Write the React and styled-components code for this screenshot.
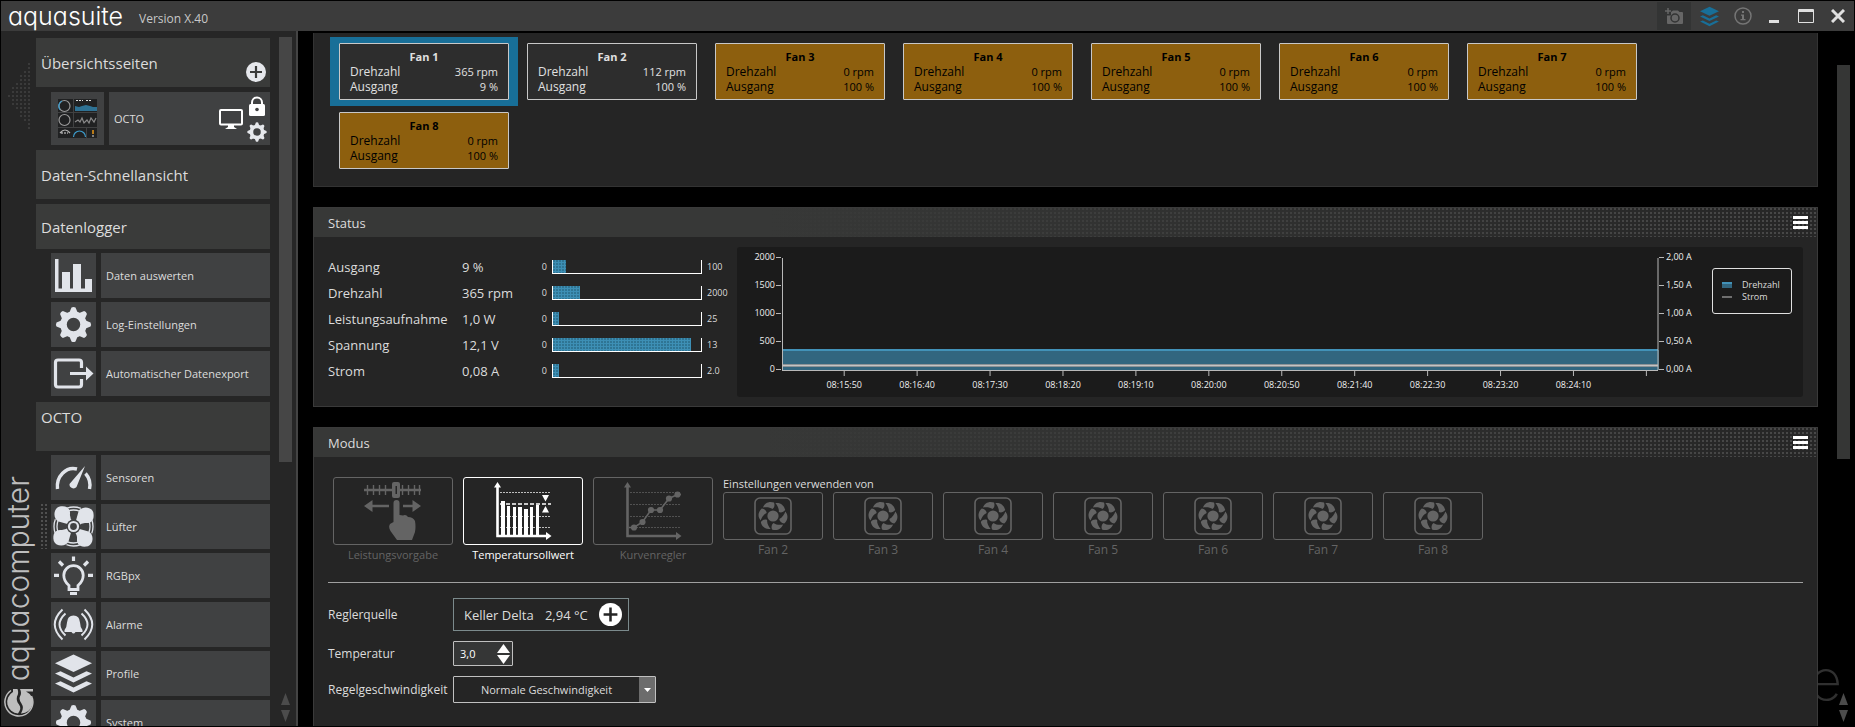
import React from "react";
import styled, { createGlobalStyle } from "styled-components";

const GlobalStyle = createGlobalStyle`
  * { box-sizing: border-box; }
  html, body, #root { height: 100%; }
  body {
    margin: 0;
    background: #000;
    color: #dcdcdc;
    font-family: "Open Sans", "Noto Sans", sans-serif;
    font-size: 12px;
    line-height: 16px;
    overflow: hidden;
  }
  button, input, select { font: inherit; color: inherit; margin: 0; }
  button { padding: 0; border: 0; background: none; cursor: pointer; }
  a { color: inherit; text-decoration: none; }
  svg { display: block; flex: none; }
  h2 { margin: 0; font-weight: 400; }
`;

/* ---------- window ---------- */

const Window = styled.div`
  display: flex;
  flex-direction: column;
  height: 100vh;
  padding: 1px;
  position: relative;
  z-index: 0;
`;

const TitleBar = styled.header`
  flex: none;
  display: flex;
  align-items: center;
  height: 30px;
  padding-left: 7px;
  background: #3c3c3c;
`;

const Wordmark = styled.span`
  font-family: "Inter", sans-serif;
  font-feature-settings: "cv11";
  font-weight: 400;
`;

const AppName = styled(Wordmark)`
  width: 131px;
  font-size: 25px;
  line-height: 26px;
  font-weight: 300;
  color: #fff;
`;

const Version = styled.span`
  flex: 1;
  padding-top: 5px;
  font-size: 12px;
  color: #c8c8c8;
`;

const WindowButton = styled.button`
  display: flex;
  align-items: center;
  justify-content: center;
  width: ${(p) => p.$width || 32}px;
  height: 28px;
  color: ${(p) => p.$color || "#e0e0e0"};
  background: ${(p) => (p.$shaded ? "#333434" : "none")};
`;

const Body = styled.div`
  flex: 1;
  min-height: 0;
  display: flex;
`;

/* ---------- sidebar ---------- */

const Sidebar = styled.aside`
  flex: none;
  display: flex;
  width: 297px;
  background: #262626;
  border-right: 2px solid #444;
  overflow: hidden;
`;

const BrandStrip = styled.div`
  flex: none;
  width: 35px;
  display: flex;
  flex-direction: column;
  align-items: center;
  justify-content: space-between;
  padding: 30px 0 9px;
`;

const Brand = styled.div`
  display: flex;
  flex-direction: column;
  align-items: center;
  gap: 6px;
`;

const BrandName = styled(Wordmark)`
  writing-mode: vertical-rl;
  transform: rotate(180deg);
  font-size: 30px;
  line-height: 35px;
  font-weight: 300;
  color: #bebebe;
`;

const Nav = styled.nav`
  flex: 1;
  padding-top: 7px;
  overflow: hidden;
`;

const SectionTitle = styled.h2`
  display: flex;
  align-items: center;
  justify-content: space-between;
  height: ${(p) => p.$height || 49}px;
  margin-bottom: ${(p) => p.$after || 5}px;
  padding: 0 4px 0 5px;
  padding-bottom: ${(p) => p.$raise || 0}px;
  background: #3a3b3a;
  font-size: 15px;
  line-height: 20px;
`;

const AddButton = styled.button`
  align-self: flex-end;
  padding-bottom: 5px;
`;

const PageRow = styled.div`
  display: flex;
  gap: 5px;
  height: 53px;
  margin: 0 0 5px 15px;
`;

const PageThumb = styled.a`
  width: 53px;
  padding: 7px;
  background: #404142;
`;

const PageItem = styled.div`
  flex: 1;
  display: flex;
  align-items: center;
  gap: 4px;
  padding: 3px 3px 3px 5px;
  background: #404142;
`;

const PageName = styled.a`
  flex: 1;
  font-size: 11px;
`;

const PageTools = styled.div`
  display: flex;
  flex-direction: column;
  gap: 6px;
`;

const NavItem = styled.a`
  display: flex;
  gap: 5px;
  height: 45px;
  margin: 0 0 4px 15px;
  position: relative;
`;

const NavIcon = styled.span`
  width: 45px;
  background: #404142;
  color: #e1e4ea;
`;

const NavLabel = styled.span`
  flex: 1;
  display: flex;
  align-items: center;
  padding-left: 5px;
  background: #404142;
  font-size: 11px;
`;

const NavGroup = styled.div`
  padding-bottom: 2px;
`;

const DragHandle = styled.span`
  position: absolute;
  left: -10px;
  top: 0;
  width: 8px;
  height: 45px;
  background-image: radial-gradient(circle at 1px 1px, #505050 1px, transparent 1px);
  background-size: 4px 4px;
`;

const ScrollRail = styled.div`
  flex: none;
  display: flex;
  flex-direction: column;
  justify-content: space-between;
  width: 13px;
  margin: ${(p) => p.$top}px ${(p) => p.$right}px 4px ${(p) => p.$left}px;
`;

const ScrollThumb = styled.div`
  height: ${(p) => p.$size}%;
  background: ${(p) => p.$color};
`;

const ScrollArrows = styled.div`
  display: flex;
  justify-content: center;
  color: #4c4c4c;
`;

/* ---------- main ---------- */

const Main = styled.main`
  flex: 1;
  min-width: 0;
  display: flex;
  flex-direction: column;
  gap: 20px;
  margin: 2px 0 0 15px;
  overflow: hidden;
`;

const Watermark = styled(Wordmark)`
  position: absolute;
  right: 13px;
  bottom: 11px;
  z-index: -1;
  font-size: 57px;
  line-height: 72px;
  font-weight: 200;
  color: #303030;
`;

const Panel = styled.section`
  flex: ${(p) => (p.$fill ? "1 0 auto" : "none")};
  border: 1px solid #3a3a3a;
  border-bottom-width: ${(p) => (p.$fill ? 0 : 1)}px;
  background: #252525;
`;

const PanelHeader = styled.header`
  display: flex;
  align-items: center;
  justify-content: space-between;
  height: 29px;
  padding: 0 9px 0 14px;
  background-color: #262626;
  background-image:
    linear-gradient(90deg, #373837 30%, transparent 100%),
    radial-gradient(circle at 1px 1px, #484848 1px, transparent 1px);
  background-size: 100% 100%, 4px 4px;
`;

const PanelTitle = styled.h2`
  font-size: 13px;
  line-height: 20px;
`;

const FanOverview = styled.section`
  flex: none;
  display: flex;
  flex-wrap: wrap;
  padding: 4px 16px 11px;
  border: 1px solid #333;
  border-top: 0;
  background: #252525;
`;

const FanSlot = styled.div`
  width: 188px;
  height: 69px;
  padding: 6px 9px;
  background: ${(p) => (p.$selected ? "#186f98" : "none")};
`;

const FanCard = styled.button`
  display: flex;
  flex-direction: column;
  width: 100%;
  height: 100%;
  padding: 5px 10px;
  border: 1px solid #c8c8c8;
  border-radius: 1px;
  line-height: 15px;
  background: ${(p) => (p.$warn ? "#8d5f0e" : "#2d2d2d")};
  color: ${(p) => (p.$warn ? "#000" : "#e0e0e0")};
`;

const FanName = styled.strong`
  align-self: center;
  font-size: 11px;
`;

const FanLine = styled.span`
  display: flex;
  justify-content: space-between;
  align-self: stretch;
`;

const FanValue = styled.span`
  font-size: 11px;
`;

/* ---------- status ---------- */

const StatusBody = styled.div`
  display: flex;
  gap: 15px;
  padding: 10px 14px 9px;
`;

const Readings = styled.div`
  flex: none;
  width: 394px;
  padding-top: 7px;
`;

const Reading = styled.div`
  display: grid;
  grid-template-columns: 134px 70px 20px 150px 1fr;
  align-items: center;
  height: 26px;
  font-size: 13px;
`;

const Limit = styled.span`
  padding: 0 5px;
  font-size: 9px;
  text-align: ${(p) => (p.$low ? "right" : "left")};
`;

const Gauge = styled.div`
  height: 14px;
  border: 1px solid #fff;
  border-top: 0;
`;

const GaugeFill = styled.div`
  height: 100%;
  background-color: #3d8fb5;
  background-image: radial-gradient(circle at 1px 1px, #2f7594 1px, transparent 1px);
  background-size: 3px 3px;
`;

const ChartBox = styled.div`
  flex: 1;
  min-width: 0;
  display: flex;
  align-items: flex-start;
  height: 150px;
  padding: 10px 11px 0 45px;
  border-radius: 3px;
  background: #1b1b1b;
`;

const Plot = styled.svg`
  flex: 1 1 0;
  min-width: 0;
  height: 136px;
  overflow: visible;
  font-size: 9px;
  fill: #f0f0f0;
`;

const Legend = styled.ul`
  flex: none;
  width: 80px;
  height: 46px;
  margin: 11px 0 0 54px;
  padding: 10px 9px;
  border: 1px solid #e0e0e0;
  border-radius: 3px;
  list-style: none;
  font-size: 9px;
  line-height: 12px;
`;

const LegendEntry = styled.li`
  display: flex;
  align-items: center;
  gap: 10px;
`;

const Swatch = styled.span`
  width: 10px;
  height: ${(p) => (p.$line ? 2 : 6)}px;
  background: ${(p) => (p.$line ? "#6f6f6f" : "#32667f")};
  border-top: ${(p) => (p.$line ? "0" : "2px solid #4292b8")};
`;

/* ---------- mode ---------- */

const ModeBody = styled.div`
  padding: 18px 14px 22px;
`;

const ModeRow = styled.div`
  display: flex;
  align-items: flex-start;
  gap: 10px;
  height: 108px;
  padding-left: 5px;
  border-bottom: 1px solid #a0a0a0;
`;

const Choice = styled.button`
  display: flex;
  flex-direction: column;
  align-items: center;
  width: ${(p) => (p.$large ? 120 : 100)}px;
  margin-top: ${(p) => (p.$large ? 2 : 0)}px;
  font-size: ${(p) => (p.$large ? 11 : 12)}px;
  line-height: 20px;
  color: ${(p) => (p.$active ? "#fff" : "#646464")};
`;

const ChoiceFrame = styled.span`
  display: flex;
  align-items: center;
  justify-content: center;
  width: 100%;
  height: ${(p) => p.$height}px;
  border: 1px solid currentColor;
  border-radius: 3px;
`;

const SourceGroup = styled.fieldset`
  margin: 0;
  padding: 0;
  border: 0;
`;

const SourceLegend = styled.legend`
  padding: 0;
  font-size: 11px;
  line-height: 17px;
`;

const SourceRow = styled.div`
  display: flex;
  gap: 10px;
`;

const Form = styled.form`
  display: grid;
  grid-template-columns: 115px max-content;
  gap: 10px;
  align-items: center;
  justify-items: start;
  padding-top: 15px;
`;

const FieldLabel = styled.label`
  font-size: 12px;
  white-space: nowrap;
`;

const SourceBox = styled.div`
  display: flex;
  align-items: center;
  justify-content: space-between;
  width: 176px;
  height: 33px;
  padding: 0 6px 0 10px;
  border: 1px solid #7b8a8c;
  font-size: 13px;
`;

const NumberBox = styled.div`
  display: flex;
  align-items: center;
  width: 60px;
  height: 25px;
  padding: 0 2px 0 6px;
  border: 1px solid #c0c0c0;
  border-radius: 1px;
  background: #353636;
`;

const NumberInput = styled.input`
  flex: 1;
  min-width: 0;
  padding: 0;
  border: 0;
  outline: 0;
  background: none;
  color: #fff;
  font-size: 11px;
`;

const Stepper = styled.span`
  display: flex;
  flex-direction: column;
  color: #fff;
`;

const SelectBox = styled.div`
  display: flex;
  width: 203px;
  height: 27px;
  border: 1px solid #c0c0c0;
  border-radius: 1px;
`;

const Select = styled.select`
  flex: 1;
  min-width: 0;
  padding: 0;
  border: 0;
  outline: 0;
  appearance: none;
  background: transparent;
  font-size: 11px;
  text-align-last: center;
`;

const SelectArrow = styled.span`
  display: flex;
  align-items: center;
  justify-content: center;
  width: 16px;
  background: #6c6c6c;
  pointer-events: none;
`;

/* ---------- icons ---------- */

const CellSvg = ({ children }) => (
  <svg width="45" height="45" viewBox="0 0 45 45" fill="currentColor" aria-hidden="true">
    {children}
  </svg>
);

const GearShape = () => (
  <g transform="translate(22.5 22.5)">
    <circle r="10" fill="none" stroke="currentColor" strokeWidth="6.5" />
    {[0, 45, 90, 135, 180, 225, 270, 315].map((a) => (
      <path key={a} d="M-2-17Q0-18 2-17L4.5-11H-4.5Z" transform={`rotate(${a})`} />
    ))}
  </g>
);

const LayersShape = () => (
  <>
    <path d="M22.5 3.5 41 12.2 22.5 21 4 12.2Z" />
    <path d="M4 22.5 9.5 20.2 22.5 26.5 35.5 20.2 41 22.5 22.5 31.5Z" />
    <path d="M4 32.5 9.5 30.2 22.5 36.5 35.5 30.2 41 32.5 22.5 41.5Z" />
  </>
);

const PlusIcon = ({ size, color, ink }) => (
  <svg width={size} height={size} viewBox="0 0 20 20" aria-hidden="true">
    <circle cx="10" cy="10" r="10" fill={color} />
    <path d="M10 4v12M4 10h12" stroke={ink} strokeWidth="2.2" />
  </svg>
);

const NAV_ICONS = {
  bars: (
    <CellSvg>
      <path d="M4 6h3.5v29.5H11V19h8v16.5h3V11h8v24.500h4V26h7v13H4Z" />
    </CellSvg>
  ),
  gear: (
    <CellSvg>
      <GearShape />
    </CellSvg>
  ),
  export: (
    <CellSvg>
      <path d="M30.5 17v-5.500q0-2.500-2.500-2.500H7q-2.500 0-2.500 2.500v22q0 2.500 2.500 2.500h21q2.500 0 2.500-2.500V28" fill="none" stroke="currentColor" strokeWidth="3.2" />
      <path d="M19 21h16v-5.500l7.500 7-7.500 7V24H19Z" />
    </CellSvg>
  ),
  gauge: (
    <CellSvg>
      <path d="M6.5 34a16 18 0 0 1 19.500-20M34.500 18.500a16 17 0 0 1 4 15.500" fill="none" stroke="currentColor" strokeWidth="3.4" />
      <path d="M34 11 25.500 32a4 4 0 0 1-7-3Z" />
    </CellSvg>
  ),
  fan: (
    <CellSvg>
      <g fill="none" stroke="currentColor" strokeWidth="1.3">
        <circle cx="22.5" cy="22.5" r="19.500" strokeDasharray="14 16.600" strokeDashoffset="7" />
        <circle cx="22.5" cy="22.5" r="16.500" strokeDasharray="12 13.900" strokeDashoffset="6" />
      </g>
      {[0, 90, 180, 270].map((a) => (
        <path key={a} d="M20 21 7.500 17.500C2 15 2 5 8 2.800C16 1 19.500 5 19 10Q18.500 14 22 18Z" transform={`rotate(${a} 22.5 22.5)`} />
      ))}
      <circle cx="22.5" cy="22.5" r="7" fill="#404142" />
      <circle cx="22.5" cy="22.5" r="4.500" fill="none" stroke="currentColor" strokeWidth="2.2" />
    </CellSvg>
  ),
  bulb: (
    <CellSvg>
      <g fill="none" stroke="currentColor" strokeWidth="2.8">
        <path d="M18 36.500V32.500C15.500 30.500 12.800 27 12.800 22.300a9.700 9.700 0 0 1 19.400 0C32.200 27 29.500 30.500 27 32.500V36.500Z" />
        <path d="M22.500 3.500v4.500M3 22.300h5M37 22.300h5M8 8.500l4 4M37 8.500l-4 4" strokeWidth="3.2" />
      </g>
      <path d="M19 39h7v3h-7Z" />
    </CellSvg>
  ),
  alarm: (
    <CellSvg>
      <path d="M22.500 13.500q6 0 6.500 7 .2 5 2.500 7.500v2H24.500q-2 3-4 0H13.500v-2q2.300-2.500 2.500-7.500.5-7 6.500-7Z" />
      <path d="M11.500 7.500Q-4 22.500 11.500 37.500M14.500 11.500Q2.500 22.500 14.500 33.500M33.500 7.500Q49 22.500 33.500 37.500M30.500 11.500Q42.500 22.500 30.500 33.500" fill="none" stroke="currentColor" strokeWidth="2" />
    </CellSvg>
  ),
  layers: (
    <CellSvg>
      <LayersShape />
    </CellSvg>
  ),
};

const MenuIcon = () => (
  <svg width="15" height="13" viewBox="0 0 15 13" fill="#fff" aria-hidden="true">
    <path d="M0 0h15v3H0ZM0 5h15v3H0ZM0 10h15v3H0Z" />
  </svg>
);

const ArrowPair = ({ width, height, gap, color = "currentColor" }) => (
  <svg width={width} height={height * 2 + gap} fill={color} aria-hidden="true">
    <path d={`M0 ${height}h${width}L${width / 2} 0Z`} />
    <path d={`M0 ${height + gap}h${width}L${width / 2} ${height * 2 + gap}Z`} />
  </svg>
);

const CollapseArrow = () => {
  const dots = [];
  for (let c = 0; c < 6; c++) {
    for (let r = -Math.round(c * 1.6); r <= Math.round(c * 1.6); r += 1) {
      dots.push(<rect key={`${c}/${r}`} x={c * 4} y={34 + r * 4} width="2" height="2" />);
    }
  }
  return (
    <svg width="22" height="70" fill="#3a3a3a" aria-hidden="true">
      {dots}
    </svg>
  );
};

const BrandLogo = () => (
  <svg width="30" height="30" viewBox="0 0 30 30" aria-hidden="true">
    <path d="M7 3.500A14 14 0 1 0 27.500 9" fill="none" stroke="#bebebe" strokeWidth="1.5" />
    <path d="M9 5A11.500 11.500 0 0 0 14 26.500Q18 21 15 17.500T13 9.500Q15 6 13.500 2H9Z" fill="#bebebe" />
    <path d="M16 2h13v2.500H22A11.500 11.500 0 0 1 17 26.500Q20.500 21 17.500 16.500T16 9.500Q18 6 16 2Z" fill="#bebebe" />
  </svg>
);

const PageThumbnail = () => (
  <svg width="39" height="39" viewBox="0 0 39 39" aria-hidden="true">
    <path fill="#202122" d="M0 0h39v39H0Z" />
    <path stroke="#404142" d="M0 13.500h39M0 28.500h39M15.500 0v28M28.500 29v10" />
    <g fill="none" strokeWidth="1.2">
      <circle cx="6.500" cy="7" r="5.500" stroke="#9a9a9a" />
      <path d="M2 10.500A5.500 5.500 0 0 1 4 2" stroke="#3d9ccc" />
      <circle cx="6.500" cy="21" r="5.500" stroke="#9a9a9a" />
      <path d="M15.500 38a6 6 0 1 1 12 0" stroke="#3d9ccc" />
      <path d="M2 34q5-6 10 0" stroke="#b0b0b0" />
      <path d="M17 23l3-2 2 2 2-4 2 5 3-3 2 3 2-5 3 4 2-4" stroke="#8a8a8a" />
      <path d="M18 1.500h7M28 1.500h6M3 34h7M34 37h3" stroke="#ddd" strokeDasharray="2 1" />
    </g>
    <path fill="#2f7294" d="M17 7l4 1 3-1 4-1 4 1 3 1h4v4H17Z" />
    <path fill="#b87a18" d="M34 31h2v4h-2Z" />
  </svg>
);

const LockIcon = () => (
  <svg width="20" height="20" viewBox="0 0 20 20" aria-hidden="true">
    <path d="M5 10V6.500a5 5 0 0 1 10 0V10" fill="none" stroke="#fff" strokeWidth="2" />
    <rect x="2" y="8" width="16" height="12" rx="1.500" fill="#fff" />
    <circle cx="10" cy="13.500" r="1.800" fill="#404142" />
  </svg>
);

const MonitorIcon = () => (
  <svg width="24" height="20" viewBox="0 0 24 20" aria-hidden="true">
    <rect x="1" y="1" width="22" height="14.500" rx="1" fill="none" stroke="#fff" strokeWidth="2" />
    <path d="M9 15h6v3l3 2H6l3-2Z" fill="#fff" />
  </svg>
);

const Axes = () => (
  <>
    <path d="M34.500 8V59H84" fill="none" stroke="currentColor" strokeWidth="2.6" />
    <path d="M31 10.500 34.500 5 38 10.500ZM83 55 88.500 59 83 63Z" />
    <path d="M37 15.500h50M37 39.500h50M37 50.500h50" stroke="currentColor" strokeOpacity=".7" strokeDasharray="2 1" />
  </>
);

const ModeSvg = ({ children }) => (
  <svg width="118" height="66" viewBox="1 1 118 66" fill="currentColor" aria-hidden="true">
    {children}
  </svg>
);

const MODE_ICONS = {
  power: (
    <ModeSvg>
      <g fill="none" stroke="currentColor">
        <path d="M31 13h57" strokeWidth="2.5" />
        <path d="M34.500 8v10M40.500 8v10M46.500 8v10M52.500 8v10M69.500 8v10M75.500 8v10M81.500 8v10M86.500 8v10" strokeWidth="1.4" />
        <path d="M38 29h18M70 29h11" strokeWidth="2.6" />
      </g>
      <rect x="59" y="5" width="8" height="16" rx="2" />
      <path d="M62.500 9h1.500v8h-1.500Z" fill="#252525" />
      <path d="M31 29 39.500 23v12ZM88 29 79.500 23v12Z" />
      <path d="M60.500 26a3 3 0 0 1 6 0V38L70 38.500Q73 37 75 40 80 40 82 44 83 50 82 55L79 63H64L57.500 54Q55 50 57 47L60.500 45Z" />
    </ModeSvg>
  ),
  target: (
    <ModeSvg>
      <Axes />
      <path d="M37 27h51" stroke="currentColor" strokeWidth="1.4" strokeDasharray="4 2" />
      <path d="M38 24h4v34h-4ZM44 29h3v29h-3ZM50 30h3v28h-3ZM55 30h4v28h-4ZM61 32h4v26h-4ZM67 30h3v28h-3ZM73 28h3v30h-3Z" />
      <path d="M79 18h7L82.500 24.500ZM79 35.500h7L82.500 29Z" />
    </ModeSvg>
  ),
  curve: (
    <ModeSvg>
      <Axes />
      <path d="M37 27.500h50" stroke="currentColor" strokeOpacity=".7" strokeDasharray="2 1" />
      <path d="M36 50.500H41L49.500 45 58 33H67L76 21.500 84.500 17.500H88" fill="none" stroke="currentColor" strokeWidth="1.6" />
      {[[41, 50.5], [49.5, 45], [58, 33], [67, 33], [76, 21.5], [84.5, 17.5]].map(([x, y]) => (
        <circle key={x} cx={x} cy={y} r="3.1" />
      ))}
    </ModeSvg>
  ),
};

const FanIcon = () => (
  <svg width="38" height="38" viewBox="-19 -19 38 38" fill="currentColor" aria-hidden="true">
    <rect x="-18" y="-18" width="36" height="36" rx="5" fill="none" stroke="currentColor" strokeWidth="1.6" />
    <circle r="5.6" />
    {[0, 60, 120, 180, 240, 300].map((a) => (
      <path key={a} d="M-.5-7C-3-9-7-9-10-8.500C-8.500-13-4-15.200 1-13.500C2-11 1.500-8.500-.5-7Z" transform={`rotate(${a})`} />
    ))}
  </svg>
);

/* ---------- data ---------- */

const FANS = [
  ["Fan 1", "365 rpm", "9 %"],
  ["Fan 2", "112 rpm", "100 %"],
  ["Fan 3", "0 rpm", "100 %"],
  ["Fan 4", "0 rpm", "100 %"],
  ["Fan 5", "0 rpm", "100 %"],
  ["Fan 6", "0 rpm", "100 %"],
  ["Fan 7", "0 rpm", "100 %"],
  ["Fan 8", "0 rpm", "100 %"],
];

const READINGS = [
  ["Ausgang", "9 %", 9, "100"],
  ["Drehzahl", "365 rpm", 18, "2000"],
  ["Leistungsaufnahme", "1,0 W", 4, "25"],
  ["Spannung", "12,1 V", 93, "13"],
  ["Strom", "0,08 A", 4, "2.0"],
];

const LOGGER_ITEMS = [
  ["bars", "Daten auswerten"],
  ["gear", "Log-Einstellungen"],
  ["export", "Automatischer Datenexport"],
];

const DEVICE_ITEMS = [
  ["gauge", "Sensoren"],
  ["fan", "Lüfter"],
  ["bulb", "RGBpx"],
  ["alarm", "Alarme"],
  ["layers", "Profile"],
  ["gear", "System"],
];

const MODES = [
  ["power", "Leistungsvorgabe"],
  ["target", "Temperatursollwert"],
  ["curve", "Kurvenregler"],
];

const TIMES = [
  "08:15:50", "08:16:40", "08:17:30", "08:18:20", "08:19:10", "08:20:00",
  "08:20:50", "08:21:40", "08:22:30", "08:23:20", "08:24:10", "",
];

const SPEEDS = ["2000", "1500", "1000", "500", "0"];
const AMPS = ["2,00 A", "1,50 A", "1,00 A", "0,50 A", "0,00 A"];

/* ---------- parts ---------- */

const NavList = ({ items, handleOn }) =>
  items.map(([icon, label]) => (
    <NavItem key={label} href="#">
      {label === handleOn && <DragHandle />}
      <NavIcon>{NAV_ICONS[icon]}</NavIcon>
      <NavLabel>{label}</NavLabel>
    </NavItem>
  ));

const Chart = () => (
  <ChartBox>
    <Plot role="img" aria-label="Drehzahl und Strom">
      <rect x="1" y="93" width="100%" height="20" fill="#32667f" />
      <line x1="1" x2="100%" y1="93" y2="93" stroke="#4292b8" strokeWidth="2" />
      <line x1="1" x2="100%" y1="108.5" y2="108.5" stroke="#8c9296" strokeWidth="3" />
      <line x1="1" x2="100%" y1="108.5" y2="108.5" stroke="#c4c4c4" />
      <g stroke="#b8b8b8">
        <line x1="0.5" x2="0.5" y1="1" y2="113" />
        <line x1="0" x2="100%" y1="113.5" y2="113.5" />
        <line x1="100%" x2="100%" y1="1" y2="113" />
      </g>
      {SPEEDS.map((v, i) => (
        <g key={v}>
          <path d={`M-6 ${i * 28 + 0.5}h5`} stroke="#b8b8b8" />
          <text x="-7" y={i * 28 + 3} textAnchor="end">{v}</text>
        </g>
      ))}
      <svg x="100%" overflow="visible">
        {AMPS.map((v, i) => (
          <g key={v}>
            <path d={`M1 ${i * 28 + 0.5}h5`} stroke="#b8b8b8" />
            <text x="8" y={i * 28 + 3}>{v}</text>
          </g>
        ))}
      </svg>
      {TIMES.map((t, i) => {
        const x = `${7.1 + i * 8.325}%`;
        return (
          <g key={x}>
            <line x1={x} x2={x} y1="114" y2="119" stroke="#b8b8b8" />
            <text x={x} y="131" textAnchor="middle">{t}</text>
          </g>
        );
      })}
    </Plot>
    <Legend>
      <LegendEntry><Swatch />Drehzahl</LegendEntry>
      <LegendEntry><Swatch $line />Strom</LegendEntry>
    </Legend>
  </ChartBox>
);

export default function App() {
  return (
    <>
      <GlobalStyle />
      <Window>
        <TitleBar>
          <AppName>aquasuite</AppName>
          <Version>Version X.40</Version>
          <WindowButton $width={34} $shaded $color="#666" aria-label="Screenshot">
            <svg width="19" height="17" viewBox="0 0 19 17" fill="currentColor" aria-hidden="true">
              <path d="M0 3h6M3 0v6" stroke="currentColor" strokeWidth="1.5" />
              <path d="M2 7.500h4V4l2-1.500h5L14.500 4H17q1 0 1 1v10q0 1-1 1H3q-1 0-1-1Z" />
              <circle cx="10" cy="10" r="4" fill="none" stroke="#333434" strokeWidth="1.5" />
            </svg>
          </WindowButton>
          <WindowButton $width={37} $color="#186f98" aria-label="Profile">
            <svg width="23" height="23" viewBox="0 0 45 45" fill="currentColor" aria-hidden="true">
              <LayersShape />
            </svg>
          </WindowButton>
          <WindowButton $width={30} $color="#757575" aria-label="Info">
            <svg width="18" height="18" viewBox="0 0 18 18" aria-hidden="true">
              <circle cx="9" cy="9" r="8" fill="none" stroke="currentColor" strokeWidth="1.5" />
              <path d="M8 4h2v2H8ZM7 7.500h3V12h1.500v1.200H6.500V12H8V8.700H7Z" fill="currentColor" />
            </svg>
          </WindowButton>
          <WindowButton aria-label="Minimieren">
            <svg width="10" height="13" fill="currentColor" aria-hidden="true"><path d="M0 10h10v3H0Z" /></svg>
          </WindowButton>
          <WindowButton aria-label="Maximieren">
            <svg width="16" height="14" fill="none" stroke="currentColor" aria-hidden="true">
              <path d="M.5.500h15v13H.500ZM0 1.500h16M0 2.500h16" />
            </svg>
          </WindowButton>
          <WindowButton aria-label="Schließen">
            <svg width="14" height="14" fill="none" stroke="currentColor" strokeWidth="3" aria-hidden="true">
              <path d="M1 1 13 13M13 1 1 13" />
            </svg>
          </WindowButton>
        </TitleBar>
        <Body>
          <Sidebar>
            <BrandStrip>
              <CollapseArrow />
              <Brand>
                <BrandName>aquacomputer</BrandName>
                <BrandLogo />
              </Brand>
            </BrandStrip>
            <Nav>
              <SectionTitle>
                Übersichtsseiten
                <AddButton aria-label="Seite hinzufügen">
                  <PlusIcon size={20} color="#e6e8ec" ink="#3a3b3a" />
                </AddButton>
              </SectionTitle>
              <PageRow>
                <PageThumb href="#" aria-label="OCTO Vorschau"><PageThumbnail /></PageThumb>
                <PageItem>
                  <PageName href="#">OCTO</PageName>
                  <MonitorIcon />
                  <PageTools>
                    <LockIcon />
                    <svg width="20" height="20" viewBox="4.5 4.5 36 36" fill="currentColor" color="#e6e8ec" aria-hidden="true">
                      <GearShape />
                    </svg>
                  </PageTools>
                </PageItem>
              </PageRow>
              <SectionTitle>Daten-Schnellansicht</SectionTitle>
              <SectionTitle $height={45} $after={4}>Datenlogger</SectionTitle>
              <NavGroup>
                <NavList items={LOGGER_ITEMS} />
              </NavGroup>
              <SectionTitle $after={4} $raise={20}>OCTO</SectionTitle>
              <NavList items={DEVICE_ITEMS} handleOn="Lüfter" />
            </Nav>
            <ScrollRail $top={6} $right={4} $left={9}>
              <ScrollThumb $size={62} $color="#464646" />
              <ScrollArrows><ArrowPair width={9} height={12} gap={5} /></ScrollArrows>
            </ScrollRail>
          </Sidebar>

          <Main>
            <FanOverview>
              {FANS.map(([name, rpm, out], i) => (
                <FanSlot key={name} $selected={i === 0}>
                  <FanCard $warn={i > 1}>
                    <FanName>{name}</FanName>
                    <FanLine>Drehzahl<FanValue>{rpm}</FanValue></FanLine>
                    <FanLine>Ausgang<FanValue>{out}</FanValue></FanLine>
                  </FanCard>
                </FanSlot>
              ))}
            </FanOverview>

            <Panel>
              <PanelHeader>
                <PanelTitle>Status</PanelTitle>
                <button aria-label="Menü Status"><MenuIcon /></button>
              </PanelHeader>
              <StatusBody>
                <Readings>
                  {READINGS.map(([label, value, share, max]) => (
                    <Reading key={label}>
                      <span>{label}</span>
                      <span>{value}</span>
                      <Limit $low>0</Limit>
                      <Gauge><GaugeFill style={{ width: `${share}%` }} /></Gauge>
                      <Limit>{max}</Limit>
                    </Reading>
                  ))}
                </Readings>
                <Chart />
              </StatusBody>
            </Panel>

            <Panel $fill>
              <PanelHeader>
                <PanelTitle>Modus</PanelTitle>
                <button aria-label="Menü Modus"><MenuIcon /></button>
              </PanelHeader>
              <ModeBody>
                <ModeRow>
                  {MODES.map(([icon, label]) => (
                    <Choice key={icon} $large $active={icon === "target"}>
                      <ChoiceFrame $height={68}>{MODE_ICONS[icon]}</ChoiceFrame>
                      {label}
                    </Choice>
                  ))}
                  <SourceGroup>
                    <SourceLegend>Einstellungen verwenden von</SourceLegend>
                    <SourceRow>
                      {FANS.slice(1).map(([name]) => (
                        <Choice key={name}>
                          <ChoiceFrame $height={48}><FanIcon /></ChoiceFrame>
                          {name}
                        </Choice>
                      ))}
                    </SourceRow>
                  </SourceGroup>
                </ModeRow>
                <Form onSubmit={(e) => e.preventDefault()}>
                  <FieldLabel htmlFor="source">Reglerquelle</FieldLabel>
                  <SourceBox>
                    <span>Keller Delta</span>
                    <span>2,94 °C</span>
                    <button type="button" id="source">
                      <PlusIcon size={23} color="#fff" ink="#252525" />
                    </button>
                  </SourceBox>
                  <FieldLabel htmlFor="temperature">Temperatur</FieldLabel>
                  <NumberBox>
                    <NumberInput id="temperature" inputMode="decimal" defaultValue="3,0" />
                    <Stepper><ArrowPair width={13} height={9} gap={2} /></Stepper>
                  </NumberBox>
                  <FieldLabel htmlFor="speed">Regelgeschwindigkeit</FieldLabel>
                  <SelectBox>
                    <Select id="speed" defaultValue="normal">
                      <option value="normal">Normale Geschwindigkeit</option>
                    </Select>
                    <SelectArrow>
                      <svg width="7" height="4" fill="#fff" aria-hidden="true"><path d="M0 0h7L3.500 4Z" /></svg>
                    </SelectArrow>
                  </SelectBox>
                </Form>
              </ModeBody>
            </Panel>
          </Main>
          <ScrollRail $top={34} $right={4} $left={19}>
            <ScrollThumb $size={60} $color="#353635" />
            <ScrollArrows><ArrowPair width={9} height={12} gap={5} /></ScrollArrows>
          </ScrollRail>
        </Body>
        <Watermark aria-hidden="true">e</Watermark>
      </Window>
    </>
  );
}
